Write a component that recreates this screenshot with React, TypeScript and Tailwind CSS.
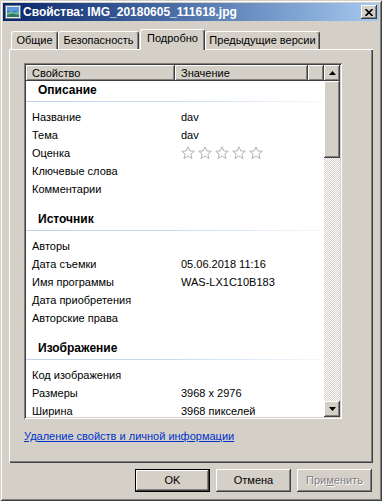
const raised =
  "bg-[#d4d0c8] shadow-[inset_-1px_-1px_0_#404040,inset_1px_1px_0_#ffffff,inset_-2px_-2px_0_#808080]";

function TitleIcon() {
  return (
    <svg width="16" height="16" viewBox="0 0 16 16" className="shrink-0">
      <rect x="0.5" y="1.5" width="15" height="13" fill="#e8e8e8" stroke="#6b7a8c" />
      <rect x="2" y="3" width="12" height="10" fill="#3a78c8" />
      <rect x="2" y="3" width="12" height="4" fill="#5a9ae0" />
      <path d="M2 9 L6 7 L10 8.5 L14 7 L14 13 L2 13 Z" fill="#6fb4a0" />
      <path d="M2 11 L7 9.5 L14 11 L14 13 L2 13 Z" fill="#2f7a62" />
    </svg>
  );
}

function Star() {
  return (
    <svg width="14" height="14" viewBox="0 0 14 14">
      <path
        d="M7 0.8 L8.8 5 L13.3 5.2 L9.8 8 L11 12.6 L7 10 L3 12.6 L4.2 8 L0.7 5.2 L5.2 5 Z"
        fill="#ffffff"
        stroke="#b4b4b4"
        strokeWidth="1"
        strokeLinejoin="round"
      />
    </svg>
  );
}

function Group({ title, first }: { title: string; first?: boolean }) {
  return (
    <div className={first ? "" : "mt-[12px]"}>
      <div className="h-[18px] flex items-center pl-[12px] font-bold text-[12px]">{title}</div>
      <div className="mt-[2px] h-px bg-gradient-to-r from-[#bcd2eb] via-[#c9dcf0] to-[#f6f9fd]" />
      <div className="h-[6px]" />
    </div>
  );
}

function Row({ name, value }: { name: string; value?: React.ReactNode }) {
  return (
    <div className="h-[18px] flex items-center shrink-0">
      <div className="w-[149px] pl-[6px] whitespace-nowrap">{name}</div>
      <div className="pl-[6px] whitespace-nowrap">{value}</div>
    </div>
  );
}

function Tab({ label, width, active }: { label: string; width: string; active?: boolean }) {
  return (
    <div
      className={`${width} flex items-center justify-center border-t border-l border-white border-r border-r-[#404040] shadow-[inset_-1px_0_0_#808080] rounded-t-[3px] bg-[#d4d0c8] ${
        active ? "h-[21px] -mb-px relative z-10 ml-px pb-[3px]" : "h-[18px]"
      }`}
    >
      {label}
    </div>
  );
}

export default function App() {
  return (
    <div className="w-[382px] h-[501px] bg-[#d4d0c8] p-[3px] flex flex-col shadow-[inset_1px_1px_0_#d4d0c8,inset_-1px_-1px_0_#404040,inset_2px_2px_0_#ffffff,inset_-2px_-2px_0_#808080] font-[family-name:'Liberation_Sans',Arial,sans-serif] text-[11px] text-black leading-none">
      {/* title bar */}
      <div className="h-[18px] flex items-center bg-gradient-to-r from-[#0a246a] to-[#a6caf0] px-[2px]">
        <TitleIcon />
        <span className="ml-[2px] text-white font-bold text-[12px] whitespace-nowrap">
          Свойства: IMG_20180605_111618.jpg
        </span>
        <div className={`ml-auto w-[16px] h-[14px] flex items-center justify-center ${raised}`}>
          <svg width="8" height="7" viewBox="0 0 8 7">
            <path d="M0.5 0 L7.5 7 M7.5 0 L0.5 7" stroke="#000" strokeWidth="1.6" />
          </svg>
        </div>
      </div>

      <div className="px-[6px] flex flex-col">
        {/* tabs */}
        <div className="mt-[8px] h-[20px] flex items-end pl-[2px]">
          <Tab label="Общие" width="w-[47px]" />
          <Tab label="Безопасность" width="w-[81px]" />
          <Tab label="Подробно" width="w-[65px]" active />
          <Tab label="Предыдущие версии" width="w-[115px]" />
        </div>

        {/* panel */}
        <div className="h-[414px] pt-[14px] pl-[15px] shadow-[inset_1px_1px_0_#ffffff,inset_-1px_-1px_0_#404040,inset_-2px_-2px_0_#808080]">
          <div className="w-[318px] h-[356px] p-[2px] flex shadow-[inset_1px_1px_0_#808080,inset_-1px_-1px_0_#ffffff,inset_2px_2px_0_#404040,inset_-2px_-2px_0_#d4d0c8]">
            <div className="w-[298px] h-[352px] bg-white flex flex-col overflow-hidden">
              <div className="h-[16px] flex shrink-0">
                <div className={`w-[149px] pl-[6px] flex items-center ${raised}`}>Свойство</div>
                <div className={`w-[133px] pl-[6px] flex items-center ${raised}`}>Значение</div>
                <div className={`flex-1 ${raised}`} />
              </div>

              <Group title="Описание" first />
              <Row name="Название" value="dav" />
              <Row name="Тема" value="dav" />
              <Row
                name="Оценка"
                value={
                  <div className="flex gap-[3px]">
                    <Star />
                    <Star />
                    <Star />
                    <Star />
                    <Star />
                  </div>
                }
              />
              <Row name="Ключевые слова" />
              <Row name="Комментарии" />

              <Group title="Источник" />
              <Row name="Авторы" />
              <Row name="Дата съемки" value="05.06.2018 11:16" />
              <Row name="Имя программы" value="WAS-LX1C10B183" />
              <Row name="Дата приобретения" />
              <Row name="Авторские права" />

              <Group title="Изображение" />
              <Row name="Код изображения" />
              <Row name="Размеры" value="3968 x 2976" />
              <Row name="Ширина" value="3968 пикселей" />
            </div>

            {/* scrollbar */}
            <div className="w-[16px] h-[352px] flex flex-col">
              <div className={`h-[16px] flex items-center justify-center ${raised}`}>
                <svg width="7" height="4" viewBox="0 0 7 4">
                  <path d="M3.5 0 L7 4 L0 4 Z" fill="#000" />
                </svg>
              </div>
              <div className={`h-[77px] ${raised}`} />
              <div className="flex-1 bg-[repeating-conic-gradient(#d4d0c8_0%_25%,#ffffff_0%_50%)] bg-[length:2px_2px]" />
              <div className={`h-[16px] flex items-center justify-center ${raised}`}>
                <svg width="7" height="4" viewBox="0 0 7 4">
                  <path d="M0 0 L7 0 L3.5 4 Z" fill="#000" />
                </svg>
              </div>
            </div>
          </div>

          <div className="mt-[11px] leading-[13px]">
            <span className="text-[#0033cc] underline">Удаление свойств и личной информации</span>
          </div>
        </div>

        {/* buttons */}
        <div className="mt-[6px] flex justify-end gap-[6px] pr-px">
          <div className="w-[75px] h-[23px] border border-black">
            <div className={`w-full h-full flex items-center justify-center ${raised}`}>OK</div>
          </div>
          <div className={`w-[75px] h-[23px] flex items-center justify-center ${raised}`}>Отмена</div>
          <div
            className={`w-[75px] h-[23px] flex items-center justify-center text-[#808080] [text-shadow:1px_1px_0_#ffffff] ${raised}`}
          >
            При<span className="underline">м</span>енить
          </div>
        </div>
      </div>
    </div>
  );
}
